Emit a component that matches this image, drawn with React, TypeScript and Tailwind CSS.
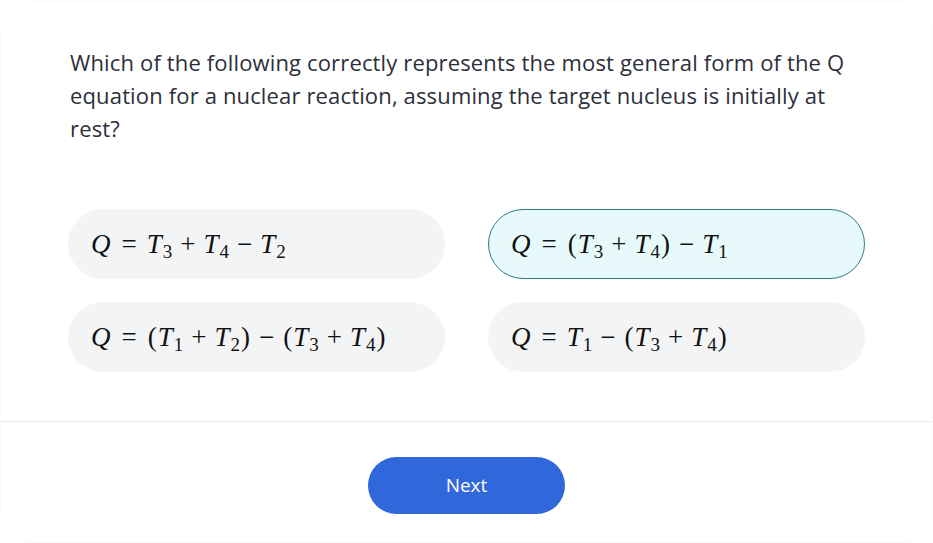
import React from 'react';

type Piece = { t: string; sub?: string; op?: 'rel' | 'bin'; it?: boolean };

// tiny katex-like renderer for the options
const Math = ({ parts }: { parts: Piece[] }) => (
    <span className="inline-flex items-baseline text-[27px] text-[#111] leading-none" style={{ fontFamily: '"Liberation Serif", "DejaVu Serif", serif' }}>
        {parts.map((p, i) => {
            if (p.op === 'rel') return <span key={i} className="px-[10px]">{p.t}</span>;
            if (p.op === 'bin') return <span key={i} className="px-[8px]">{p.t}</span>;
            return (
                <span key={i} className="inline-flex items-baseline">
                    <span className={p.it ? 'italic pr-[1px]' : 'px-[1px]'}>{p.t}</span>
                    {p.sub && <span className="text-[19px] relative top-[5px]">{p.sub}</span>}
                </span>
            );
        })}
    </span>
);

const T = (n: string): Piece => ({ t: 'T', sub: n, it: true });
const Q: Piece = { t: 'Q', it: true };
const eq: Piece = { t: '=', op: 'rel' };
const plus: Piece = { t: '+', op: 'bin' };
const minus: Piece = { t: '\u2212', op: 'bin' };
const lp: Piece = { t: '(' };
const rp: Piece = { t: ')' };

const options: { id: string; parts: Piece[] }[] = [
    { id: 'a', parts: [Q, eq, T('3'), plus, T('4'), minus, T('2')] },
    { id: 'b', parts: [Q, eq, lp, T('3'), plus, T('4'), rp, minus, T('1')] },
    { id: 'c', parts: [Q, eq, lp, T('1'), plus, T('2'), rp, minus, lp, T('3'), plus, T('4'), rp] },
    { id: 'd', parts: [Q, eq, T('1'), minus, lp, T('3'), plus, T('4'), rp] },
];

export default function App() {
    const selected = 'b';

    return (
        <div className="w-[933px] h-[543px] bg-white">
            <div className="w-full h-full flex flex-col rounded-[30px] border border-dotted border-gray-100 overflow-hidden">
                {/* Question */}
                <div className="pt-[45px] pl-[69px] pr-[40px]">
                    <p className="text-[22px] leading-[33px] tracking-[0.15px] text-[#2d2f3a]" style={{ fontFamily: '"Open Sans", "Noto Sans", sans-serif' }}>
                        Which of the following correctly represents the most general form of the Q<br />
                        equation for a nuclear reaction, assuming the target nucleus is initially at<br />
                        rest?
                    </p>
                </div>

                {/* Options */}
                <div className="mt-[64px] px-[67px] grid grid-cols-2 gap-x-[43px] gap-y-[23px]">
                    {options.map((o) => (
                        <button
                            key={o.id}
                            className={`h-[70px] rounded-[35px] flex items-center pl-[22px] text-left ${
                                o.id === selected ? 'bg-[#e8f9fb] border border-[#2c7d84]' : 'bg-[#f3f4f6] border border-transparent'
                            }`}
                        >
                            <Math parts={o.parts} />
                        </button>
                    ))}
                </div>

                <div className="mt-[49px] border-t border-[#e8e8e8]" />

                <div className="flex justify-center pt-[35px]">
                    <button
                        className="w-[197px] h-[57px] rounded-full bg-[#3068dc] text-white text-[19px]"
                        style={{ fontFamily: '"Open Sans", "Noto Sans", sans-serif' }}
                    >
                        Next
                    </button>
                </div>
            </div>
        </div>
    );
}
